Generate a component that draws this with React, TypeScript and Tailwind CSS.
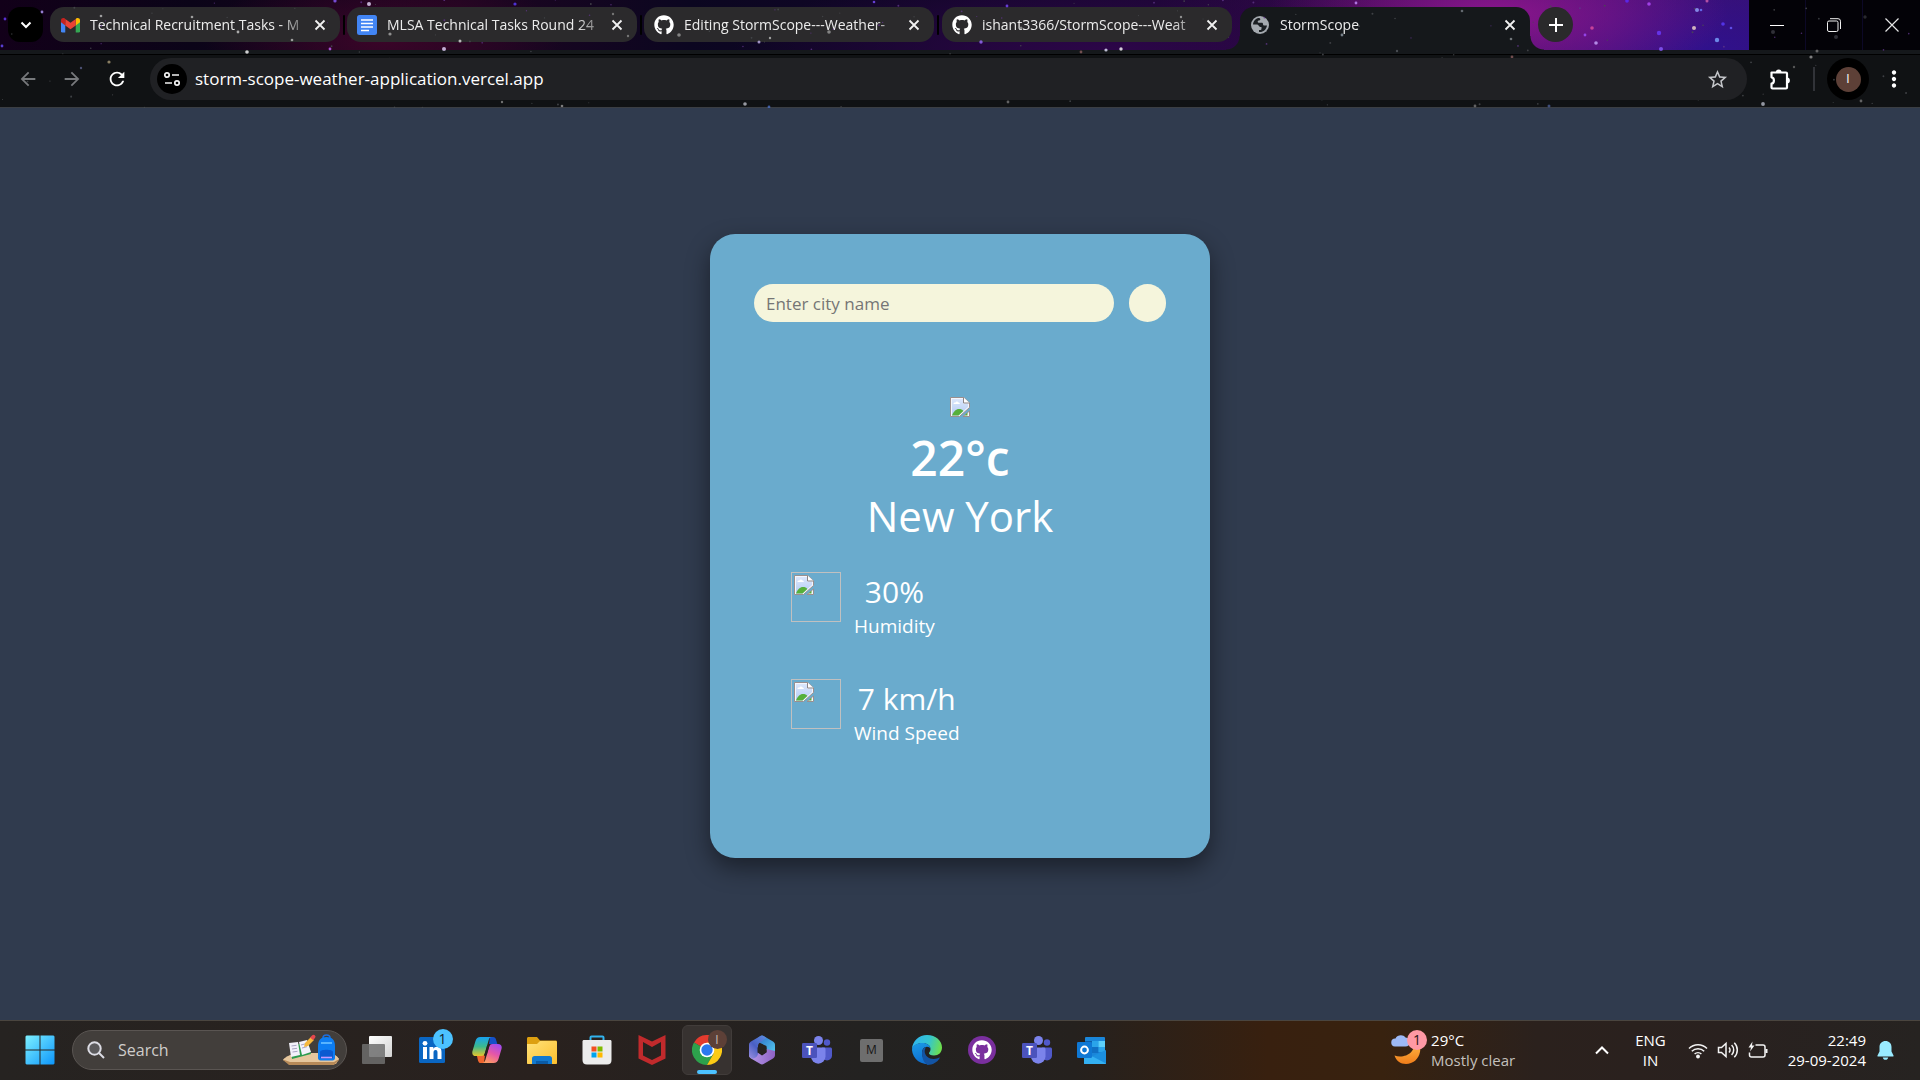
import React, { useState } from "react";
import {
  MdArrowBack,
  MdArrowForward,
  MdRefresh,
  MdStarOutline,
  MdMoreVert,
} from "react-icons/md";
import { FaGithub } from "react-icons/fa";

/* ---------- starfield behind the browser chrome ---------- */

type Star = [x: number, y: number, r: number, color: string];

const brightStars: Star[] = [
  [369, 4, 2, "#e9dcff"],
  [515, 4, 1.6, "#5a3cff"],
  [335, 1, 1.6, "#8a5cff"],
  [247, 52, 1.8, "#ffffff"],
  [444, 49, 2, "#e7d6ff"],
  [460, 41, 1.5, "#dddddd"],
  [330, 49, 1.4, "#c466ff"],
  [5, 19, 1.4, "#6a3cff"],
  [42, 12, 1.4, "#b59cff"],
  [2, 46, 1.4, "#6a4cff"],
  [101, 16, 1.3, "#bbbbbb"],
  [192, 17, 1.3, "#bbbbbb"],
  [238, 32, 1.4, "#cccccc"],
  [292, 40, 1.3, "#bbbbbb"],
  [390, 34, 1.6, "#aaaaaa"],
  [613, 14, 1.2, "#888888"],
  [628, 36, 1.2, "#888888"],
  [109, 62, 1.6, "#a89a76"],
  [81, 68, 1.2, "#5a5f8a"],
  [502, 102, 1.2, "#888888"],
  [562, 106, 1.3, "#999999"],
  [745, 104, 1.8, "#b9bcc4"],
  [769, 107, 1.4, "#4b6fc4"],
  [679, 35, 1.8, "#9a9a9a"],
  [829, 32, 1.8, "#9a9a9a"],
  [759, 42, 1.5, "#c4b4ee"],
  [770, 38, 1.2, "#bbbbbb"],
  [874, 2, 1.3, "#7a4cff"],
  [981, 42, 1.7, "#9a6cff"],
  [1007, 6, 1.4, "#7a4cff"],
  [1021, 28, 1.5, "#9a9a9a"],
  [1106, 50, 1.6, "#e7e7ff"],
  [1121, 49, 1.7, "#ffffff"],
  [1081, 52, 1.4, "#8a5c5c"],
  [1181, 17, 1.2, "#aaaaaa"],
  [1342, 35, 1.4, "#8e9aa4"],
  [1462, 11, 1.3, "#777d84"],
  [1511, 39, 1.3, "#888e94"],
  [1397, 51, 1.2, "#55595e"],
  [1356, 3, 1.4, "#c48cff"],
  [1592, 28, 1.8, "#e04f9e"],
  [1596, 43, 1.8, "#c8a8ff"],
  [1585, 35, 1.4, "#a050ff"],
  [1627, 1, 1.8, "#5a2cff"],
  [1649, 4, 1.8, "#b44cff"],
  [1659, 33, 2.2, "#6a3cff"],
  [1661, 49, 2, "#8a5cff"],
  [1694, 28, 2, "#f4dccb"],
  [1697, 10, 2, "#93a6ff"],
  [1701, 10, 1.3, "#6a7cff"],
  [1707, 1, 1.5, "#d05fae"],
  [1717, 40, 2.2, "#7aa6ff"],
  [1723, 24, 1.8, "#5a3cff"],
  [1731, 28, 1.3, "#6a5cff"],
  [1773, 32, 2, "#3c3c44"],
  [1836, 37, 2, "#3a3a40"],
  [1865, 17, 1.7, "#333338"],
  [1817, 51, 1.5, "#777777"],
  [1811, 57, 1.6, "#999999"],
  [1763, 104, 1.9, "#b4b8c4"],
  [1549, 106, 1.5, "#4a5c94"],
  [1475, 106, 1.4, "#777777"],
  [1861, 101, 1.4, "#777777"],
  [1794, 67, 1.2, "#666666"],
  [1512, 57, 1.4, "#8a5c5c"],
  [1008, 102, 1.4, "#777777"],
];

const faintStars: Star[] = (() => {
  let seed = 7;
  const rnd = () => {
    seed = (seed * 16807) % 2147483647;
    return seed / 2147483647;
  };
  return Array.from({ length: 190 }, (): Star => {
    const y = rnd() * 108;
    const purple = y < 50 && rnd() > 0.5;
    return [rnd() * 1920, y, 0.5 + rnd() * 0.5, purple ? "#5f3688" : "#4a4c50"];
  });
})();

function Starfield() {
  return (
    <svg className="pointer-events-none absolute inset-0 h-full w-full" aria-hidden="true">
      {[...faintStars, ...brightStars].map(([x, y, r, color], i) => (
        <circle key={i} cx={`${(x / 1920) * 100}%`} cy={y} r={r} fill={color} opacity={0.8} />
      ))}
    </svg>
  );
}

/* ---------- small icons ---------- */

function CloseIcon() {
  return (
    <svg viewBox="0 0 12 12" className="size-3" stroke="#f1f1f1" strokeWidth="1.8" aria-hidden="true">
      <path d="M1.500 1.500l9 9M10.500 1.500l-9 9" />
    </svg>
  );
}

function GmailIcon() {
  return (
    <svg viewBox="0 0 20 16" className="h-4 w-[19px]" aria-hidden="true">
      <path d="M0 3v11.500A1.500 1.500 0 001.500 16H4.500V6z" fill="#4285f4" />
      <path d="M20 3v11.500a1.500 1.500 0 01-1.500 1.500H15.500V6z" fill="#34a853" />
      <path d="M15.500 1.600V8.500L20 5V3c0-2.200-2.500-2.900-4-1.800z" fill="#fbbc04" />
      <path d="M4.500 8.500V1.600L10 5.700l5.500-4.100v6.900L10 12.600z" fill="#ea4335" />
      <path d="M0 3v2l4.500 3.500V1.600L4 1.200C2.500.100 0 .800 0 3z" fill="#c5221f" />
    </svg>
  );
}

function DocsIcon() {
  return (
    <svg viewBox="0 0 20 20" className="size-5" aria-hidden="true">
      <rect width="20" height="20" rx="2.500" fill="#4285f4" />
      <path d="M4 5h12M4 8.500h12M4 12h12M4 15.500h8" stroke="#fff" strokeWidth="1.700" />
    </svg>
  );
}

function GlobeIcon() {
  return (
    <svg viewBox="0 0 18 18" className="size-[18px]" aria-hidden="true">
      <circle cx="9" cy="9" r="9" fill="#a4a9af" />
      <path
        d="M7.500 2c-3 .700-5.300 3.300-5.500 6.500h3.500c1.300 0 2 .700 2.500 1.500.4.700 1 1 2 1h.5v1.500c0 1-.5 1.500-1.500 1.500H8v2c4 .500 7.500-2.500 8-6.500h-2.500c-1 0-1.500-.5-1.500-1.500 0-.8-.5-1.200-1.500-1.200H8.200c-1 0-1.500-.4-1.500-1.100 0-.9.6-1.300 1.500-1.300.7 0 1.100-.4 1.100-1.100 0-.7-.4-1.300-1.800-1.300z"
        fill="#1b1f23"
      />
    </svg>
  );
}

function PuzzleIcon() {
  return (
    <svg viewBox="0 0 22 22" className="size-[22px]" aria-hidden="true">
      <path
        d="M2.500 4.500h5.300M11.700 4.500H17a1 1 0 011 1v14a1 1 0 01-1 1H3.500a1 1 0 01-1-1v-3.800c3.200-.3 3.200-6.100 0-6.400V4.500h5.300z"
        fill="none"
        stroke="#fff"
        strokeWidth="2.200"
        strokeLinejoin="round"
      />
      <path d="M6.800 4.500a2.900 2.900 0 015.800 0zM18 9.500a2.900 2.900 0 010 5.800z" fill="#fff" />
    </svg>
  );
}

function BrokenImage() {
  return (
    <svg viewBox="0 0 20 20" className="size-5" aria-hidden="true">
      <defs>
        <linearGradient id="sky" x1="0" y1="0" x2="0" y2="1">
          <stop offset="0" stopColor="#dbe6fb" />
          <stop offset="1" stopColor="#b4ccf4" />
        </linearGradient>
      </defs>
      <path d="M.500.500H14L19.500 6v4.500L9.500 19.500H.500z" fill="#f4f7fd" stroke="#9a8f8f" />
      <path d="M2 2h11v4.500h5V10L8.500 18.500H2z" fill="url(#sky)" />
      <path d="M3.500 7c0-1 1-1.600 1.800-1.300C5.800 4 8 4 8.500 5.500 9.800 5.400 10.200 7 9.500 7z" fill="#fff" />
      <path d="M2 18.500c1.500-4 4-6.500 7-6.500 2 0 3.300.600 4.300 1.900L8.500 18.500z" fill="#56b03a" />
      <path d="M13.500.500V6h6" fill="#fff" stroke="#8d8585" />
      <path d="M19.500 14v5.500H13z" fill="#f4f7fd" stroke="#9a8f8f" />
      <path d="M14.500 18.500l3-2.800v2.800z" fill="#56b03a" />
    </svg>
  );
}

function SiteInfoIcon() {
  return (
    <svg viewBox="0 0 18 18" className="size-[18px]" fill="none" stroke="#f1f1f1" strokeWidth="1.700" aria-hidden="true">
      <circle cx="4" cy="5" r="2.200" />
      <path d="M9 5h7M2 13h7" />
      <circle cx="14" cy="13" r="2.200" />
    </svg>
  );
}

/* ---------- taskbar icons ---------- */

function StartIcon() {
  return (
    <svg viewBox="0 0 30 30" className="size-[30px]" aria-hidden="true">
      <defs>
        <linearGradient id="win" x1="0" y1="0" x2="1" y2="1">
          <stop offset="0" stopColor="#7df0ff" />
          <stop offset="1" stopColor="#0d96fb" />
        </linearGradient>
      </defs>
      <path d="M1.500.500H14.500V14.500H.500V1.500zM15.500.500H28.500l1 1V14.500h-14zM.500 15.500h14v14H1.500l-1-1zM15.500 15.500h14v13l-1 1h-13z" fill="url(#win)" />
    </svg>
  );
}

function SearchArt() {
  return (
    <svg viewBox="0 0 58 32" className="h-8 w-[58px]" aria-hidden="true">
      <path d="M1 26c4-4 12-7 20-7h24c6 0 10 3 12 6l-3 5H8z" fill="#dcb98c" />
      <path d="M1 26l6 5h45l5-5z" fill="#b78a58" />
      <path d="M1 25.500C6 21 12 19 21 19h24c6 0 10 3 12 6l-5 3H8z" fill="#e6c79d" />
      <path d="M8 12l18-4 3 12-19 5z" fill="#2d9b4e" />
      <path d="M7 9l9-1 2 13-9 2zM17 8l8-2 4 12-9 3z" fill="#f3f1fa" />
      <path d="M9.500 12l5-.700M10 15l5-.700M10.500 18l5-.700M19 11l5-1.300M20 14l5-1.300" stroke="#a9a4c4" />
      <path d="M22 13l1-4 6-6 3 3-6 6z" fill="#f6b73c" />
      <path d="M28 3.500l2-2a1.800 1.800 0 013 2.500l-2 2z" fill="#e5484d" />
      <path d="M41 4c0-4 7-4 7 0" fill="none" stroke="#1d6fe0" strokeWidth="1.500" />
      <path d="M36 12c0-6 3-9 8.500-9S53 6 53 12v12c0 1.500-1 2.500-2.500 2.500h-12C37 26.500 36 25.500 36 24z" fill="#0d7df2" />
      <path d="M39 9h11" stroke="#57b4ff" strokeWidth="2" />
      <path d="M38 18c0-3 13-3 13 0v5c0 1-.5 1.500-1.500 1.500h-10c-1 0-1.500-.5-1.500-1.500z" fill="#0a5ad1" />
      <path d="M39 23.500h11" stroke="#c59bff" strokeWidth="1.600" />
    </svg>
  );
}

function TaskViewIcon() {
  return (
    <svg viewBox="0 0 30 28" className="h-7 w-[30px]" aria-hidden="true">
      <defs>
        <linearGradient id="tv" x1="0" y1="0" x2="1" y2="1">
          <stop offset="0" stopColor="#ffffff" />
          <stop offset="1" stopColor="#d3d3d3" />
        </linearGradient>
      </defs>
      <rect x="7" y="0" width="23" height="21" rx="1" fill="url(#tv)" />
      <rect x="0" y="8" width="23" height="20" rx="1" fill="#6f6f6f" opacity="0.850" />
    </svg>
  );
}

function LinkedInIcon() {
  return (
    <svg viewBox="0 0 26 26" className="size-[26px]" aria-hidden="true">
      <rect width="26" height="26" rx="1.500" fill="#0a66c2" />
      <g fill="#fff">
        <circle cx="6" cy="6.300" r="2.400" />
        <path d="M4 10h4v12H4zM10.500 10h3.800v1.700c.7-1.200 2-2 3.700-2 3.500 0 4.500 2.300 4.500 5.500V22h-4v-6.200c0-1.500-.3-2.700-1.900-2.700s-2.100 1.200-2.100 2.700V22h-4z" />
      </g>
    </svg>
  );
}

function CopilotIcon() {
  return (
    <svg viewBox="0 0 30 28" className="h-7 w-[30px]" aria-hidden="true">
      <defs>
        <linearGradient id="cpA" x1="0" y1="0" x2="0" y2="1">
          <stop offset="0" stopColor="#18a2f0" />
          <stop offset="0.500" stopColor="#3bb98f" />
          <stop offset="1" stopColor="#e6c52c" />
        </linearGradient>
        <linearGradient id="cpB" x1="0.800" y1="0" x2="0.300" y2="1">
          <stop offset="0" stopColor="#a04bf0" />
          <stop offset="0.500" stopColor="#e556a8" />
          <stop offset="1" stopColor="#ff9d62" />
        </linearGradient>
      </defs>
      <path d="M18 1h3c1.800 0 2.500 1 3 2.600L25.300 8H17z" fill="#1550c8" />
      <path d="M12 27H9c-1.800 0-2.500-1-3-2.600L4.700 19H13z" fill="#f0662f" />
      <path d="M8.500 1H20c-2 0-2.800 1.200-3.400 3.200L13 17c-.6 2-1.500 3-3.500 3H4c-3 0-4.300-2-3.500-5L3.500 5C4.300 2.300 5.700 1 8.500 1z" fill="url(#cpA)" />
      <path d="M21.500 27H10c2 0 2.800-1.200 3.400-3.200L17 11c.6-2 1.500-3 3.500-3H26c3 0 4.300 2 3.500 5l-3 10c-.8 2.700-2.200 4-5 4z" fill="url(#cpB)" />
      <path d="M14.800 10.500c.6-1.700 1.700-2.500 3.200-2.500l-2.800 9.500c-.6 1.700-1.700 2.500-3.200 2.500z" fill="#26221f" />
    </svg>
  );
}

function FolderIcon() {
  return (
    <svg viewBox="0 0 30 27" className="h-[27px] w-[30px]" aria-hidden="true">
      <defs>
        <linearGradient id="fold" x1="0" y1="0" x2="1" y2="1">
          <stop offset="0" stopColor="#ffe27a" />
          <stop offset="1" stopColor="#fcbf2d" />
        </linearGradient>
      </defs>
      <path d="M0 1.500C0 .600.600 0 1.500 0H10l3 3.500h15.500c1 0 1.500.700 1.500 1.500v6H0z" fill="#dd9f10" />
      <path d="M0 7h10l3-3h15.500c1 0 1.500.600 1.500 1.500V26c0 .600-.4 1-1 1H1c-.6 0-1-.4-1-1z" fill="url(#fold)" />
      <path d="M5 27v-5.500C5 20 6 19 7.500 19h15c1.500 0 2.500 1 2.500 2.500V27z" fill="#1279cf" />
      <path d="M9 24h12v3H9z" fill="#0b5ba6" />
    </svg>
  );
}

function StoreIcon() {
  return (
    <svg viewBox="0 0 30 30" className="size-[30px]" aria-hidden="true">
      <path d="M8.500 6V2.500c0-.600.400-1 1-1h11c.6 0 1 .400 1 1V6" fill="none" stroke="#31b4ee" strokeWidth="2" />
      <path d="M.500 6.500C.500 5.500 1 5 2 5h26c1 0 1.500.500 1.500 1.500V25c0 3-1.500 4.500-4.500 4.500H5C2 29.500.500 28 .500 25z" fill="#ececec" />
      <path d="M9.500 11.500h5v5h-5z" fill="#f25022" />
      <path d="M15.500 11.500h5v5h-5z" fill="#7fba00" />
      <path d="M9.500 17.500h5v5h-5z" fill="#00a4ef" />
      <path d="M15.500 17.500h5v5h-5z" fill="#ffb900" />
    </svg>
  );
}

function McAfeeIcon() {
  return (
    <svg viewBox="0 0 28 30" className="h-[30px] w-7" aria-hidden="true">
      <path d="M.500 0L14 6.500 27.500 0v23.500L14 30 .500 23.500zM5 7v13.500l9 4.500 9-4.500V7l-9 5z" fill="#c12a2c" fillRule="evenodd" />
    </svg>
  );
}

function ChromeIcon() {
  return (
    <svg viewBox="0 0 30 30" className="size-[30px]" aria-hidden="true">
      <path d="M15 15L2 7.500A15 15 0 0128 7.500z" fill="#e33b2e" />
      <path d="M2 7.500A15 15 0 0015 30l6.500-11.200L15 15z" fill="#2da14c" />
      <path d="M28 7.500A15 15 0 0115 30l6.500-11.200L15 7.500z" fill="#fccb15" />
      <circle cx="15" cy="15" r="7.300" fill="#fff" />
      <circle cx="15" cy="15" r="5.700" fill="#2b78ee" />
    </svg>
  );
}

function M365Icon() {
  return (
    <svg viewBox="0 0 28 30" className="h-[30px] w-7" aria-hidden="true">
      <defs>
        <linearGradient id="mA" x1="0" y1="1" x2="0.800" y2="0">
          <stop offset="0" stopColor="#9a8fe0" />
          <stop offset="0.500" stopColor="#4a5fc4" />
          <stop offset="1" stopColor="#5a86dc" />
        </linearGradient>
        <linearGradient id="mB" x1="0" y1="0" x2="1" y2="1">
          <stop offset="0" stopColor="#2b6cc8" />
          <stop offset="1" stopColor="#56cdf0" />
        </linearGradient>
        <linearGradient id="mC" x1="0" y1="0" x2="1" y2="0">
          <stop offset="0" stopColor="#b79aea" />
          <stop offset="1" stopColor="#8e62c4" />
        </linearGradient>
      </defs>
      <path d="M12 1.200c1.300-.8 2.700-.8 4 0L25 6.600c1.300.8 2 1.900 2 3.400v9l-8.500-4v-4L10 7V3z" fill="url(#mB)" />
      <path d="M27 16v4c0 1.500-.7 2.600-2 3.400L16 28.800c-1.300.8-2.700.8-4 0L3 23.400C1.700 22.600 1 21.500 1 20l9-3 4 3.500 4.500-3.500V14z" fill="url(#mC)" />
      <path d="M1 10v10c0 2 1.500 3.500 3.500 3.500S10 22 10 18v-6.500c0-2 .5-3 2-4L18.500 3 16 1.200c-1.300-.8-2.700-.8-4 0L3 6.600C1.700 7.400 1 8.500 1 10z" fill="url(#mA)" />
      <path d="M14 9.800l4.500 2.700v5L14 20.200l-4.500-2.700v-5z" fill="#262321" />
    </svg>
  );
}

function TeamsIcon() {
  return (
    <svg viewBox="0 0 30 28" className="h-7 w-[30px]" aria-hidden="true">
      <circle cx="25" cy="6.500" r="3.200" fill="#5059c9" />
      <path d="M20 11.500h8.500c.8 0 1.500.6 1.500 1.500v6.500a5 5 0 01-10 0z" fill="#5059c9" />
      <circle cx="16.500" cy="4.500" r="4.500" fill="#7b83eb" />
      <path d="M9 11.500h13c.8 0 1.500.6 1.500 1.500v7.500a7.200 7.200 0 01-14.500 0z" fill="#7b83eb" />
      <rect x="0" y="7" width="15" height="15" rx="1.300" fill="#4b53bc" />
      <text x="7.500" y="18.500" textAnchor="middle" fontSize="12" fontWeight="700" fill="#fff" fontFamily="Open Sans, sans-serif">T</text>
    </svg>
  );
}

function EdgeIcon() {
  return (
    <svg viewBox="0 0 30 30" className="size-[30px]" aria-hidden="true">
      <defs>
        <linearGradient id="edA" x1="0" y1="0.300" x2="1" y2="0.500">
          <stop offset="0" stopColor="#2fb4ef" />
          <stop offset="0.550" stopColor="#35c5cf" />
          <stop offset="1" stopColor="#6ee04b" />
        </linearGradient>
        <linearGradient id="edB" x1="0" y1="0" x2="0.300" y2="1">
          <stop offset="0" stopColor="#1b9be6" />
          <stop offset="1" stopColor="#0f6fd0" />
        </linearGradient>
      </defs>
      <path d="M0 14C.500 6 7 0 15 0c9 0 15 6 15 12.500 0 5-3.500 8-8 8-3.500 0-5-1.300-5-2.300 0-.8 1.500-1.500 1.500-4.200C18.500 10.500 15 8 10.500 8 5.500 8 1.500 10.500 0 14z" fill="url(#edA)" />
      <path d="M0 15c0-5 5-7 10.500-7 4.500 0 8 2.500 8 6-.5-1.500-2-2.300-3.500-2.300-3 0-5 2.800-5 6.300 0 5 3.500 9.500 9 10.500A15 15 0 010 15z" fill="url(#edB)" />
      <path d="M10 18c0-3 1.700-5.500 4-6-.5 1-1.300 2.500-1.300 4.500 0 4 4 7.500 9 7.500 2.500 0 4.500-1 5.500-1.500.5-.2.800.2.500.6C25.500 27.500 20.500 30 15.500 30c-3.500-2-5.500-7-5.500-12z" fill="#1354a4" />
    </svg>
  );
}

function OutlookIcon() {
  return (
    <svg viewBox="0 0 30 28" className="h-7 w-[30px]" aria-hidden="true">
      <rect x="8" y="1" width="20" height="19" rx="1" fill="#1a86d9" />
      <path d="M8 5h7v7H8z" fill="#0f5ea8" />
      <path d="M15 5h6.500v6H15z" fill="#2aa4ea" />
      <path d="M21.500 5H28v6h-6.500z" fill="#5cd0fa" />
      <path d="M15 11h6.500v6H15z" fill="#1070c4" />
      <path d="M21.500 11H28v5h-6.500z" fill="#2aa4ea" />
      <path d="M29 14v13c0 .600-.4 1-1 1H8c-.6 0-1-.4-1-1v-3z" fill="#1b90e0" />
      <path d="M7 16l22 11.500c-.3.400-.6.500-1 .500H8c-.6 0-1-.4-1-1z" fill="#34b1f3" />
      <rect x="0" y="6" width="15" height="16" rx="1.300" fill="#0f78d4" />
      <circle cx="7.500" cy="14" r="3.400" fill="none" stroke="#fff" strokeWidth="2" />
    </svg>
  );
}

function WeatherIcon() {
  return (
    <svg viewBox="0 0 32 32" className="size-8" aria-hidden="true">
      <defs>
        <linearGradient id="moon" x1="0" y1="0" x2="0" y2="1">
          <stop offset="0" stopColor="#ffc04a" />
          <stop offset="1" stopColor="#f07d1a" />
        </linearGradient>
      </defs>
      <path d="M23 6c5 2 7 7 6 12-1.200 7-7 12-14 12-5.500 0-10-3.500-11.500-8.500C13 25 26 19 23 6z" fill="url(#moon)" />
      <path d="M4 12.500a4 4 0 01.500-8C6 1 12 0 14.500 3.500c3 0 4.500 2.200 4.500 4.500 0 2.600-1.800 4.500-4.500 4.500z" fill="#9db9f5" />
    </svg>
  );
}

const stroke = { fill: "none", stroke: "#f3f3f3", strokeWidth: 1.5 } as const;

function WifiIcon() {
  return (
    <svg viewBox="0 0 20 18" className="h-[18px] w-5" {...stroke} aria-hidden="true">
      <path d="M1 7.500a12.500 12.500 0 0118 0M3.800 10.300a8.700 8.700 0 0112.400 0M6.600 13a4.900 4.900 0 016.800 0" />
      <circle cx="10" cy="15.500" r="1.200" fill="#f3f3f3" />
    </svg>
  );
}

function VolumeIcon() {
  return (
    <svg viewBox="0 0 22 18" className="h-[18px] w-[22px]" {...stroke} aria-hidden="true">
      <path d="M1.500 6.500h3L9 2.500v13l-4.500-4h-3z" />
      <path d="M12 6.500a3.500 3.500 0 010 5M14.600 4a7 7 0 010 10M17.300 1.700a10.400 10.400 0 010 14.600" />
    </svg>
  );
}

function BatteryIcon() {
  return (
    <svg viewBox="0 0 20 18" className="h-[18px] w-5" {...stroke} aria-hidden="true">
      <path d="M7.500 4H15a2 2 0 012 2v8a2 2 0 01-2 2H3.500a2 2 0 01-2-2v-2.500" />
      <path d="M18.500 8v4" strokeWidth="2" />
      <path d="M4.500.500L.500 6.500h2.500l-1 4 4.500-6H4z" fill="#f3f3f3" stroke="none" />
    </svg>
  );
}

/* ---------- browser chrome ---------- */

const tabs = [
  { title: "Technical Recruitment Tasks - M", icon: <GmailIcon /> },
  { title: "MLSA Technical Tasks Round 24", icon: <DocsIcon /> },
  { title: "Editing StormScope---Weather-", icon: <FaGithub className="size-5 text-white" /> },
  { title: "ishant3366/StormScope---Weat", icon: <FaGithub className="size-5 text-white" /> },
  { title: "StormScope", icon: <GlobeIcon /> },
];

function Tab({ title, icon, active }: { title: string; icon: React.ReactNode; active: boolean }) {
  const shape = active
    ? "h-[43px] rounded-t-[14px] bg-[#15181b] pb-2"
    : "h-[35px] rounded-[14px] bg-[#2b2a2c]";
  return (
    <div className={`relative flex w-[290px] min-w-0 items-center pr-3.5 pl-2.5 ${shape}`}>
      {active && (
        <>
          <span className="absolute right-full bottom-0 size-3.5 bg-[radial-gradient(circle_at_0_0,transparent_13px,#15181b_14px)]" />
          <span className="absolute bottom-0 left-full size-3.5 bg-[radial-gradient(circle_at_100%_0,transparent_13px,#15181b_14px)]" />
        </>
      )}
      <span className="flex w-5 shrink-0 justify-center">{icon}</span>
      <a
        href="#"
        className="ml-2.5 min-w-0 flex-1 text-sm whitespace-nowrap text-[#ececec] [mask-image:linear-gradient(to_right,black_88%,rgba(0,0,0,0.2))]"
      >
        {title}
      </a>
      <button aria-label={`Close ${title}`} className="ml-2 shrink-0">
        <CloseIcon />
      </button>
    </div>
  );
}

function BrowserHeader() {
  return (
    <header className="relative flex flex-col bg-[#101214]">
      <div className="flex h-[50px] items-start bg-[radial-gradient(ellipse_180px_70px_at_20%_80%,#3a0528,transparent),radial-gradient(ellipse_230px_80px_at_78%_30%,#8a168d,transparent),radial-gradient(ellipse_240px_90px_at_89%_100%,#2f118c,transparent),radial-gradient(ellipse_380px_80px_at_58%_100%,#2c0648,transparent),linear-gradient(to_right,#120019,#0b0418_10%,#1d0520_24%,#0b0620_36%,#180630_60%,#3b0a52_72%,#4a0f70_84%,#24106e)]">
        <div className="flex min-w-0 flex-1 items-start pt-[7px] pl-2">
          <button aria-label="Search tabs" className="mr-[7px] flex h-[35px] w-[35px] shrink-0 items-center justify-center rounded-xl bg-black">
            <svg viewBox="0 0 12 8" className="h-2 w-3" fill="none" stroke="#fff" strokeWidth="2" aria-hidden="true">
              <path d="M1.500 1.500L6 6l4.500-4.500" />
            </svg>
          </button>
          {tabs.map((tab, i) => (
            <React.Fragment key={tab.title}>
              {i > 0 && (
                <span className={i < 3 ? "flex h-[35px] w-[7px] shrink-0 items-center justify-center" : "flex h-[35px] w-2 shrink-0 items-center justify-center"}>
                  <span className={i < 4 ? "h-5 w-0.5 rounded bg-black" : "hidden"} />
                </span>
              )}
              <Tab {...tab} active={i === 4} />
            </React.Fragment>
          ))}
          <button aria-label="New tab" className="relative ml-2 flex size-[35px] shrink-0 items-center justify-center rounded-full bg-[#2a2a2b]">
            <svg viewBox="0 0 14 14" className="size-3.5" stroke="#fff" strokeWidth="2" aria-hidden="true">
              <path d="M7 0v14M0 7h14" />
            </svg>
          </button>
        </div>
        <div className="flex h-[50px] shrink-0 bg-[#030207]">
          <button aria-label="Minimize" className="flex w-[57px] items-center justify-center border-r border-[#0c0826]">
            <span className="h-px w-3.5 bg-white" />
          </button>
          <button aria-label="Restore" className="flex w-[57px] items-center justify-center border-r border-[#0c0826]">
            <svg viewBox="0 0 14 14" className="size-3.5" fill="none" stroke="#f0f0f0" aria-hidden="true">
              <rect x="0.500" y="3" width="10.500" height="10.500" rx="1.500" />
              <path d="M3 .700h8A2.500 2.500 0 0113.500 3.200V11" />
            </svg>
          </button>
          <button aria-label="Close window" className="flex w-[57px] items-center justify-center">
            <svg viewBox="0 0 14 14" className="size-3.5" stroke="#e6e6e6" strokeWidth="1.200" aria-hidden="true">
              <path d="M.500.500l13 13M13.500.500l-13 13" />
            </svg>
          </button>
        </div>
      </div>
      <Starfield />
      <div className="flex h-[58px] flex-col border-b border-[#3b3e43]">
        <div className="h-1 bg-[#15181b]" />
        <div className="h-px shrink-0 bg-black" />
        <div className="mt-[3px] flex h-[42px] items-center">
          <button aria-label="Back" className="flex w-14 justify-center text-[#77797c]">
            <MdArrowBack className="size-[22px]" />
          </button>
          <button aria-label="Forward" className="flex w-8 justify-center text-[#77797c]">
            <MdArrowForward className="size-[22px]" />
          </button>
          <button aria-label="Reload" className="flex w-[58px] justify-center text-white">
            <MdRefresh className="size-[22px]" />
          </button>
          <div className="relative ml-1 flex h-[42px] min-w-0 flex-1 items-center rounded-full bg-[#202124] pr-[18px] pl-[7px]">
            <button aria-label="View site information" className="flex size-[30px] shrink-0 items-center justify-center rounded-full bg-black">
              <SiteInfoIcon />
            </button>
            <input
              aria-label="Address"
              defaultValue="storm-scope-weather-application.vercel.app"
              className="ml-2 min-w-0 flex-1 bg-transparent text-[17px] text-white outline-none"
            />
            <button aria-label="Bookmark this page" className="text-[#c4c6ca]">
              <MdStarOutline className="size-[23px]" />
            </button>
          </div>
          <button aria-label="Extensions" className="flex w-[66px] justify-center">
            <PuzzleIcon />
          </button>
          <span className="h-6 w-0.5 bg-[#313338]" />
          <button aria-label="Profile" className="ml-3 flex size-[42px] items-center justify-center rounded-full bg-black">
            <span className="flex size-[25px] items-center justify-center rounded-full bg-[#5d4037] text-xs text-white">I</span>
          </button>
          <button aria-label="Menu" className="flex w-[51px] justify-center pr-0.5 text-white">
            <MdMoreVert className="size-[26px]" />
          </button>
        </div>
      </div>
    </header>
  );
}

/* ---------- weather card ---------- */

const stats = [
  { value: "30%", label: "Humidity" },
  { value: "7 km/h", label: "Wind Speed" },
];

function WeatherCard() {
  const [city, setCity] = useState("");
  return (
    <section className="w-full max-w-[500px] rounded-[25px] bg-[#6aabcd] px-11 pt-[50px] pb-[110px] text-center text-white shadow-[0_10px_24px_rgba(0,0,0,0.45)]">
      <form className="flex items-center gap-[15px]" onSubmit={(e) => e.preventDefault()}>
        <input
          aria-label="City name"
          placeholder="Enter city name"
          value={city}
          onChange={(e) => setCity(e.target.value)}
          className="h-[38px] min-w-0 flex-1 rounded-full bg-[#f5f5dc] px-3 text-[17px] text-gray-900 outline-none placeholder:text-[#757575]"
        />
        <button aria-label="Search" className="h-[38px] w-[37px] shrink-0 rounded-full bg-[#f5f5dc]" />
      </form>
      <div className="mt-[75px] flex justify-center">
        <BrokenImage />
      </div>
      <h1 className="mt-2 text-[48px] leading-[66px] font-semibold">22°c</h1>
      <h2 className="text-[42px] leading-[50px]">New York</h2>
      <div className="mt-[31px] flex flex-col gap-[38px] pl-[37px]">
        {stats.map((s) => (
          <div key={s.label} className="flex items-start gap-[13px]">
            <span className="flex size-[50px] border border-[#c0c0c0] pt-0.5 pl-0.5">
              <BrokenImage />
            </span>
            <div>
              <p className="text-[30px] leading-10">{s.value}</p>
              <p className="text-[19px] leading-[29px]">{s.label}</p>
            </div>
          </div>
        ))}
      </div>
    </section>
  );
}

/* ---------- taskbar ---------- */

const apps = [
  { name: "Task View", icon: <TaskViewIcon /> },
  { name: "LinkedIn", icon: <LinkedInIcon />, badge: "1" },
  { name: "Copilot", icon: <CopilotIcon /> },
  { name: "File Explorer", icon: <FolderIcon /> },
  { name: "Microsoft Store", icon: <StoreIcon /> },
  { name: "McAfee", icon: <McAfeeIcon /> },
  { name: "Google Chrome", icon: <ChromeIcon />, profile: "I" },
  { name: "Microsoft 365", icon: <M365Icon /> },
  { name: "Microsoft Teams", icon: <TeamsIcon /> },
  {
    name: "M",
    icon: <span className="flex size-[23px] items-center justify-center rounded-xs bg-[#6e6e6e] text-xs text-[#161616]">M</span>,
  },
  { name: "Microsoft Edge", icon: <EdgeIcon /> },
  {
    name: "GitHub Desktop",
    icon: (
      <span className="flex size-7 items-center justify-center rounded-full bg-[#7a2f9e]">
        <FaGithub className="size-5 text-white" />
      </span>
    ),
  },
  { name: "Microsoft Teams (work)", icon: <TeamsIcon /> },
  { name: "Outlook", icon: <OutlookIcon /> },
];

function Taskbar() {
  return (
    <footer className="flex h-[60px] items-center border-t border-[#4a453f] bg-[linear-gradient(to_right,#262321,#29211e_28%,#232221_45%,#25211e_56%,#38200f_66%,#38220f_72%,#2b211d_80%,#29211f_90%,#262321)] pb-px text-white">
      <button aria-label="Start" className="flex w-20 justify-center">
        <StartIcon />
      </button>
      <label className="-ml-2 flex h-10 w-[275px] items-center rounded-full border border-[#5a5552] bg-[#423e3b] pr-1.5 pl-3.5">
        <svg viewBox="0 0 18 18" className="size-[18px] shrink-0" fill="none" stroke="#dcdce4" strokeWidth="2" aria-hidden="true">
          <circle cx="7.500" cy="7.500" r="6.200" fill="#5b5a5c" />
          <path d="M12 12l5 5" />
        </svg>
        <input
          aria-label="Search Windows"
          placeholder="Search"
          className="ml-[13px] w-0 min-w-0 flex-1 bg-transparent text-base text-white outline-none placeholder:text-[#cfcdcb]"
        />
        <SearchArt />
      </label>
      <nav aria-label="Apps" className="ml-0.5 flex">
        {apps.map((app) => (
          <button key={app.name} aria-label={app.name} className="flex w-[55px] justify-center">
            <span
              className={
                app.profile
                  ? "relative flex size-[50px] items-center justify-center rounded-md border border-[#413c3a] bg-[#373230]"
                  : "relative flex size-[50px] items-center justify-center"
              }
            >
              {app.icon}
              {app.badge && (
                <span className="absolute top-1 right-1 flex size-5 items-center justify-center rounded-full bg-[#4cc2ff] text-sm text-[#10222c]">
                  {app.badge}
                </span>
              )}
              {app.profile && (
                <>
                  <span className="absolute top-1 right-1 flex size-[19px] items-center justify-center rounded-full bg-[#5d4037] text-xs text-[#c9bdb8]">
                    {app.profile}
                  </span>
                  <span className="absolute bottom-0 h-1 w-5 rounded-full bg-[#4cc2ff]" />
                </>
              )}
            </span>
          </button>
        ))}
      </nav>
      <div className="ml-auto flex h-full items-center">
        <button className="flex h-full items-center text-left text-[15px] leading-5">
          <span className="relative mr-2">
            <WeatherIcon />
            <span className="absolute -top-1 -right-1 flex size-5 items-center justify-center rounded-full bg-[#ff99a4] text-sm text-[#2a1518]">
              1
            </span>
          </span>
          <span>
            <span className="block">29°C</span>
            <span className="block text-[#c4c0bd]">Mostly clear</span>
          </span>
        </button>
        <button aria-label="Show hidden icons" className="ml-20">
          <svg viewBox="0 0 14 9" className="h-[9px] w-3.5" fill="none" stroke="#fff" strokeWidth="2" aria-hidden="true">
            <path d="M1 7.500l6-6 6 6" />
          </svg>
        </button>
        <button className="ml-[26px] text-center text-[15px] leading-5">
          <span className="block">ENG</span>
          <span className="block">IN</span>
        </button>
        <button aria-label="Network, volume and battery" className="ml-[22px] flex items-center gap-[9px]">
          <WifiIcon />
          <VolumeIcon />
          <BatteryIcon />
        </button>
        <button className="ml-5 text-right text-[15px] leading-5">
          <span className="block">22:49</span>
          <span className="block">29-09-2024</span>
        </button>
        <button aria-label="Notifications" className="mr-[26px] ml-[11px]">
          <svg viewBox="0 0 17 19" className="h-[19px] w-[17px]" fill="#99ebff" aria-hidden="true">
            <path d="M8.500 0C12 0 14.500 2.500 14.500 6v4.500l2 4c.2.500 0 1-.6 1H1.100c-.6 0-.8-.5-.6-1l2-4V6c0-3.500 2.500-6 6-6zM5.800 16.500h5.400c-.3 1.500-1.300 2.300-2.700 2.300s-2.400-.8-2.700-2.300z" />
          </svg>
        </button>
      </div>
    </footer>
  );
}

export default function App() {
  return (
    <div className="flex min-h-screen flex-col bg-[#303b4e] font-['Open_Sans','Noto_Sans',sans-serif]">
      <BrowserHeader />
      <main className="flex flex-1 items-start justify-center pt-[126px] pb-10">
        <WeatherCard />
      </main>
      <Taskbar />
    </div>
  );
}
